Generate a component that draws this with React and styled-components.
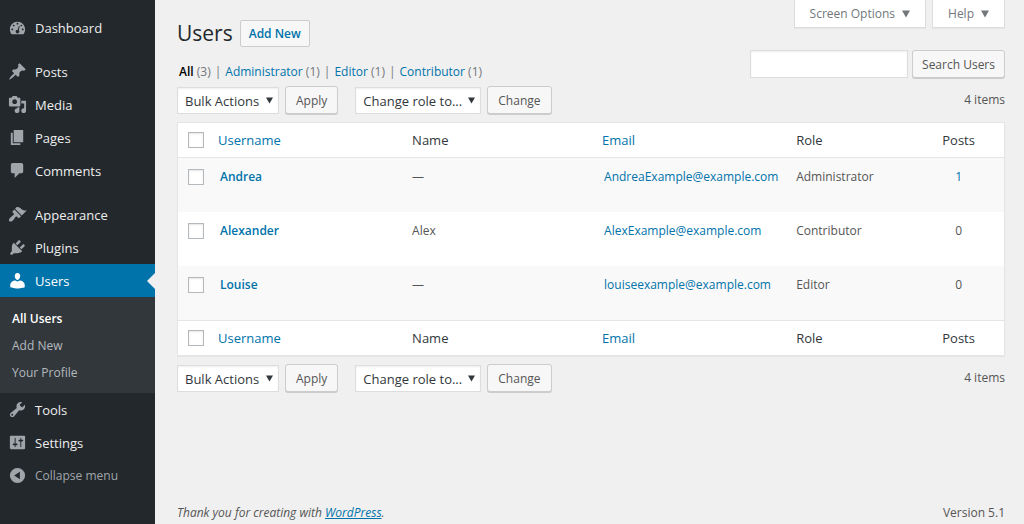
import React from "react"
import styled, { createGlobalStyle, css, ThemeProvider } from "styled-components"

const theme = {
    colors: {
        sidebar: "#23282d",
        submenu: "#32373c",
        active: "#0073aa",
        icon: "#a0a5aa",
        menuText: "#eeeeee",
        subText: "#b4b9be",
        page: "#f0f0f0",
        text: "#32373c",
        cell: "#555555",
        muted: "#72777c",
        link: "#0073aa",
        border: "#dddddd",
        line: "#e5e5e5",
        stripe: "#f9f9f9",
    },
}

const GlobalStyle = createGlobalStyle`
    * {
        box-sizing: border-box;
    }
    body {
        margin: 0;
        background: #f0f0f0;
        font-family: "Open Sans", "Noto Sans", sans-serif;
        font-size: 12px;
        line-height: 18px;
        color: #555555;
    }
    button, input, select {
        font-family: inherit;
        margin: 0;
    }
    ul {
        list-style: none;
        margin: 0;
        padding: 0;
    }
`

const Layout = styled.div`
    display: flex;
    min-height: 100vh;
`

/* Sidebar */
const Sidebar = styled.nav`
    flex: 0 0 155px;
    padding-top: 11px;
    background: ${({ theme }) => theme.colors.sidebar};
`
const MenuItem = styled.li`
    margin-top: ${({ $spaced }) => ($spaced ? "11px" : "0")};
`
const menuRow = css`
    position: relative;
    display: flex;
    align-items: center;
    gap: 8px;
    width: 100%;
    height: 33px;
    padding: 0 8px;
    border: 0;
    font-size: 13px;
    line-height: 18px;
    text-decoration: none;
    white-space: nowrap;
`
const MenuLink = styled.a`
    ${menuRow}
    color: ${({ theme, $active }) => ($active ? "#ffffff" : theme.colors.menuText)};
    background: ${({ theme, $active }) => ($active ? theme.colors.active : "transparent")};

    svg {
        fill: ${({ theme, $active }) => ($active ? "#ffffff" : theme.colors.icon)};
    }

    ${({ $active, theme }) =>
        $active &&
        css`
            &::after {
                content: "";
                position: absolute;
                top: 9px;
                right: 0;
                border: 8px solid transparent;
                border-left: 0;
                border-right-color: ${theme.colors.page};
            }
        `}
`
const CollapseButton = styled.button`
    ${menuRow}
    color: ${({ theme }) => theme.colors.icon};
    background: transparent;
    font-size: 12px;

    svg {
        fill: ${({ theme }) => theme.colors.icon};
    }
`
const MenuIcon = styled.svg`
    flex: none;
    width: 19px;
    height: 19px;
`
const Submenu = styled.ul`
    padding: 8px 0 7px;
    background: ${({ theme }) => theme.colors.submenu};
`
const SubmenuLink = styled.a`
    display: block;
    padding: 0 12px;
    font-size: 12px;
    line-height: 27px;
    text-decoration: none;
    font-weight: ${({ $current }) => ($current ? 600 : 400)};
    color: ${({ theme, $current }) => ($current ? "#ffffff" : theme.colors.subText)};
`

/* Page */
const Main = styled.main`
    flex: 1;
    min-width: 0;
    display: flex;
    flex-direction: column;
    padding: 0 19px 0 22px;
`
const PageHeader = styled.header`
    display: flex;
    justify-content: space-between;
`
const HeaderLeft = styled.div`
    padding-top: 20px;
`
const HeaderRight = styled.div`
    display: flex;
    flex-direction: column;
    align-items: flex-end;
`
const TitleRow = styled.div`
    display: flex;
    align-items: center;
    gap: 7px;
`
const Title = styled.h1`
    margin: 0;
    font-size: 21px;
    line-height: 27px;
    font-weight: 400;
    color: #23282d;
`
const AddNew = styled.a`
    padding: 0 8px;
    border: 1px solid #cccccc;
    border-radius: 2px;
    background: #f7f7f7;
    font-weight: 600;
    line-height: 25px;
    text-decoration: none;
    color: ${({ theme }) => theme.colors.link};
`
const Filters = styled.ul`
    display: flex;
    margin-top: 16px;
    padding-left: 2px;
    color: ${({ theme }) => theme.colors.muted};

    li + li::before {
        content: "|";
        margin: 0 4px;
    }
`
const FilterLink = styled.a`
    text-decoration: none;
    font-weight: ${({ $current }) => ($current ? 600 : 400)};
    color: ${({ theme, $current }) => ($current ? "#000000" : theme.colors.link)};
`
const ScreenTabs = styled.div`
    display: flex;
    gap: 6px;
`
const ScreenTab = styled.button`
    display: flex;
    align-items: center;
    gap: 7px;
    height: 28px;
    padding: 0 15px;
    border: 1px solid ${({ theme }) => theme.colors.border};
    border-top: 0;
    background: #ffffff;
    box-shadow: 0 1px 1px rgba(0, 0, 0, 0.04);
    font-size: 12px;
    color: ${({ theme }) => theme.colors.muted};
`
const SearchForm = styled.form`
    display: flex;
    gap: 4px;
    margin-top: 22px;
`
const SearchInput = styled.input`
    width: 158px;
    height: 28px;
    padding: 3px 5px;
    border: 1px solid ${({ theme }) => theme.colors.border};
    background: #ffffff;
    box-shadow: inset 0 1px 2px rgba(0, 0, 0, 0.07);
    font-size: 13px;
`
const Button = styled.button`
    height: 28px;
    padding: 0 10px;
    border: 1px solid #cccccc;
    border-radius: 3px;
    background: #f7f7f7;
    box-shadow: 0 1px 0 #cccccc;
    font-size: 12px;
    color: ${({ theme }) => theme.colors.cell};
    white-space: nowrap;
`
const SearchButton = styled(Button)`
    padding: 0 9px;
`
const TableNav = styled.div`
    display: flex;
    align-items: center;
    gap: 17px;
    padding: ${({ $top }) => ($top ? "5px" : "8px")} 0 8px;
`
const NavGroup = styled.div`
    display: flex;
    align-items: flex-end;
    gap: 6px;
`
const SelectWrap = styled.div`
    position: relative;
    width: ${({ $wide }) => ($wide ? "126px" : "102px")};

    svg {
        position: absolute;
        top: 10px;
        right: 6px;
        pointer-events: none;
    }
`
const Select = styled.select`
    display: block;
    width: 100%;
    height: 27px;
    padding: 0 7px;
    appearance: none;
    border: 1px solid ${({ theme }) => theme.colors.border};
    border-radius: 0;
    background: #ffffff;
    box-shadow: inset 0 1px 2px rgba(0, 0, 0, 0.07);
    font-size: 13px;
    color: ${({ theme }) => theme.colors.text};
`
const ItemCount = styled.span`
    margin-left: auto;
    color: ${({ theme }) => theme.colors.cell};
`

/* Users table */
const Table = styled.table`
    width: 100%;
    table-layout: fixed;
    border-collapse: separate;
    border-spacing: 0;
    border: 1px solid ${({ theme }) => theme.colors.line};
    background: #ffffff;
    box-shadow: 0 1px 1px rgba(0, 0, 0, 0.04);

    thead th, thead td {
        border-bottom: 1px solid ${({ theme }) => theme.colors.line};
    }
    tfoot th, tfoot td {
        border-top: 1px solid ${({ theme }) => theme.colors.line};
    }
    tbody tr:nth-child(odd) {
        background: ${({ theme }) => theme.colors.stripe};
    }
`
const HeadCell = styled.th`
    width: ${({ $width }) => $width || "auto"};
    height: 35px;
    padding: 0 8px;
    font-size: 13px;
    font-weight: 400;
    text-align: ${({ $center }) => ($center ? "center" : "left")};
    color: ${({ theme }) => theme.colors.text};
`
const CheckCell = styled.td`
    width: 32px;
    height: ${({ $body }) => ($body ? "54px" : "35px")};
    padding: ${({ $body }) => ($body ? "11px 0 0 10px" : "0 0 0 10px")};
    vertical-align: ${({ $body }) => ($body ? "top" : "middle")};
`
const Checkbox = styled.input`
    display: block;
    width: 16px;
    height: 16px;
    margin: 0;
    appearance: none;
    border: 1px solid #b4b9be;
    background: #ffffff;
    box-shadow: inset 0 1px 2px rgba(0, 0, 0, 0.1);
`
const Cell = styled.td`
    padding: 10px 0 0 ${({ $inset }) => ($inset ? "10px" : "8px")};
    vertical-align: top;
    text-align: ${({ $center }) => ($center ? "center" : "left")};
    color: ${({ theme }) => theme.colors.cell};

    ${({ $center }) => $center && "padding-right: 8px;"}
`
const Link = styled.a`
    text-decoration: none;
    font-weight: ${({ $strong }) => ($strong ? 600 : 400)};
    color: ${({ theme }) => theme.colors.link};
`

const Footer = styled.footer`
    display: flex;
    justify-content: space-between;
    margin-top: auto;
    padding-bottom: 2px;

    a {
        color: ${({ theme }) => theme.colors.link};
    }
`

const icons = {
    dashboard:
        "M3.76 17h12.48c1.1-1.37 1.76-3.11 1.76-5 0-4.42-3.58-8-8-8s-8 3.58-8 8c0 1.89.66 3.63 1.76 5zM10 5c.55 0 1 .45 1 1s-.45 1-1 1-1-.45-1-1 .45-1 1-1zM6 7c.55 0 1 .45 1 1s-.45 1-1 1-1-.45-1-1 .45-1 1-1zm8 0c.55 0 1 .45 1 1s-.45 1-1 1-1-.45-1-1 .45-1 1-1zm-2.63 1.51l1 .3-1.06 3.97c.44.37.69.9.69 1.47 0 1.1-.9 2-2 2s-2-.9-2-2 .9-2 2-2c.12 0 .23.01.34.03zM4.5 11c.55 0 1 .45 1 1s-.45 1-1 1-1-.45-1-1 .45-1 1-1zm11 0c.55 0 1 .45 1 1s-.45 1-1 1-1-.45-1-1 .45-1 1-1z",
    post: "M10.44 3.02l1.82-1.82 6.36 6.35-1.83 1.82c-1.05-.68-2.48-.57-3.41.36l-.75.75c-.92.93-1.04 2.35-.35 3.41l-1.83 1.82-2.41-2.41-2.8 2.79c-.42.42-3.38 2.71-3.8 2.29s1.86-3.39 2.28-3.81l2.79-2.79L4.1 9.36l1.83-1.82c1.05.69 2.48.57 3.4-.36l.75-.75c.93-.92 1.05-2.35.36-3.41z",
    media:
        "M13 11V4c0-.55-.45-1-1-1h-1.67L9 1H5L3.67 3H2c-.55 0-1 .45-1 1v7c0 .55.45 1 1 1h10c.55 0 1-.45 1-1zM7 4.5c1.38 0 2.5 1.12 2.5 2.5S8.38 9.5 7 9.5 4.5 8.38 4.5 7 5.62 4.5 7 4.5zM14 6h5v10.5c0 1.38-1.12 2.5-2.5 2.5S14 17.88 14 16.5s1.12-2.5 2.5-2.5c.17 0 .34.02.5.05V9h-3V6zm-4 8.05V13h2v3.5c0 1.38-1.12 2.5-2.5 2.5S7 17.88 7 16.5 8.12 14 9.5 14c.17 0 .34.02.5.05z",
    page: "M6 15V2h10v13H6zm-1 1h8v2H3V5h2v11z",
    comments:
        "M5 2h9c1.1 0 2 .9 2 2v7c0 1.1-.9 2-2 2h-2l-5 5v-5H5c-1.1 0-2-.9-2-2V4c0-1.1.9-2 2-2z",
    appearance:
        "M14.48 11.06L7.41 3.99l1.5-1.5c.5-.56 2.3-.47 3.51.32 1.21.8 1.43 1.28 2.91 2.1 1.18.64 2.45 1.26 4.45.85zm-.71.71L6.7 4.7 4.93 6.47c-.39.39-.39 1.02 0 1.41l1.06 1.06c.39.39.39 1.03 0 1.42-.6.6-1.43 1.11-2.21 1.69-.35.26-.7.53-1.01.84C1.43 14.23.4 16.08 1.4 17.07c.99 1 2.84-.03 4.18-1.36.31-.31.58-.66.85-1.02.57-.78 1.08-1.61 1.69-2.21.39-.39 1.02-.39 1.41 0l1.06 1.06c.39.39 1.02.39 1.41 0z",
    plugins:
        "M13.11 4.36L9.87 7.6 8 5.73l3.24-3.24c.35-.34 1.05-.2 1.56.32.52.51.66 1.21.31 1.55zm-8 1.77l.91-1.12 9.01 9.01-1.19.84c-.71.71-2.63 1.16-3.82 1.16H6.14L4.9 17.26c-.59.59-1.54.59-2.12 0-.59-.58-.59-1.53 0-2.12l1.24-1.24v-3.88c0-1.13.4-3.19 1.09-3.89zm7.26 3.97l3.24-3.24c.34-.35 1.04-.21 1.55.31.52.51.66 1.21.31 1.55l-3.24 3.25z",
    users: "M10 9.4c-2.27 0-2.83-3.5-2.83-3.5C6.9 4.02 7.72 2 9.97 2c2.26 0 3.08 2.02 2.81 3.9 0 0-.51 3.5-2.78 3.5zm0 1.6l2.5-1.1c2.6.1 5.1 2.2 5.1 4.7v2.4s-3.9 1.3-7.6 1.3-7.6-1.3-7.6-1.3v-2.4c0-2.5 2.3-4.6 5.1-4.7z",
    tools: "M16.68 9.77c-1.34 1.34-3.3 1.67-4.95.99l-5.41 6.52c-.99.99-2.59.99-3.58 0s-.99-2.59 0-3.57l6.52-5.42c-.68-1.65-.35-3.61.99-4.95 1.28-1.28 3.12-1.62 4.72-1.06l-2.89 2.89 2.82 2.82 2.86-2.87c.53 1.58.18 3.39-1.08 4.65zM3.81 16.21c.4.39 1.04.39 1.43 0 .4-.4.4-1.04 0-1.43-.39-.4-1.03-.4-1.43 0-.39.39-.39 1.03 0 1.43z",
    settings:
        "M18 16V4c0-.55-.45-1-1-1H3c-.55 0-1 .45-1 1v12c0 .55.45 1 1 1h14c.55 0 1-.45 1-1zM8 11h1c.55 0 1 .45 1 1s-.45 1-1 1H8v1.5c0 .28-.22.5-.5.5s-.5-.22-.5-.5V13H6c-.55 0-1-.45-1-1s.45-1 1-1h1V5.5c0-.28.22-.5.5-.5s.5.22.5.5V11zm5-2h-1c-.55 0-1-.45-1-1s.45-1 1-1h1V5.5c0-.28.22-.5.5-.5s.5.22.5.5V7h1c.55 0 1 .45 1 1s-.45 1-1 1h-1v5.5c0 .28-.22.5-.5.5s-.5-.22-.5-.5V9z",
    collapse: "M10 2a8 8 0 1 0 0 16 8 8 0 0 0 0-16zm2.5 4v8L6.5 10z",
}

const menu = [
    { label: "Dashboard", icon: "dashboard" },
    { label: "Posts", icon: "post", spaced: true },
    { label: "Media", icon: "media" },
    { label: "Pages", icon: "page" },
    { label: "Comments", icon: "comments" },
    { label: "Appearance", icon: "appearance", spaced: true },
    { label: "Plugins", icon: "plugins" },
    { label: "Users", icon: "users", active: true, children: ["All Users", "Add New", "Your Profile"] },
    { label: "Tools", icon: "tools" },
    { label: "Settings", icon: "settings" },
]

const filters = [
    { label: "All", count: 3 },
    { label: "Administrator", count: 1 },
    { label: "Editor", count: 1 },
    { label: "Contributor", count: 1 },
]

const users = [
    { username: "Andrea", name: "—", email: "AndreaExample@example.com", role: "Administrator", posts: 1 },
    { username: "Alexander", name: "Alex", email: "AlexExample@example.com", role: "Contributor", posts: 0 },
    { username: "Louise", name: "—", email: "louiseexample@example.com", role: "Editor", posts: 0 },
]

const Icon = ({ name }) => (
    <MenuIcon viewBox="0 0 20 20" aria-hidden="true">
        <path fillRule="evenodd" d={icons[name]} />
    </MenuIcon>
)

const Arrow = ({ size, color }) => (
    <svg width={size} height={size} viewBox="0 0 8 8" aria-hidden="true">
        <path d="M0 0.5h8L4 7.5z" fill={color} />
    </svg>
)

const AdminMenu = () => (
    <Sidebar aria-label="Main menu">
        <ul>
            {menu.map(({ label, icon, spaced, active, children }) => (
                <MenuItem key={label} $spaced={spaced}>
                    <MenuLink href="#" $active={active}>
                        <Icon name={icon} />
                        {label}
                    </MenuLink>
                    {children && (
                        <Submenu>
                            {children.map((child, i) => (
                                <li key={child}>
                                    <SubmenuLink href="#" $current={i === 0}>
                                        {child}
                                    </SubmenuLink>
                                </li>
                            ))}
                        </Submenu>
                    )}
                </MenuItem>
            ))}
            <MenuItem>
                <CollapseButton type="button">
                    <Icon name="collapse" />
                    Collapse menu
                </CollapseButton>
            </MenuItem>
        </ul>
    </Sidebar>
)

const BulkNav = ({ top }) => (
    <TableNav $top={top}>
        <NavGroup>
            <SelectWrap>
                <Select aria-label="Select bulk action">
                    <option>Bulk Actions</option>
                    <option>Delete</option>
                </Select>
                <Arrow size={7} color="#32373c" />
            </SelectWrap>
            <Button type="button">Apply</Button>
        </NavGroup>
        <NavGroup>
            <SelectWrap $wide>
                <Select aria-label="Change role to">
                    <option>Change role to...</option>
                    <option>Editor</option>
                </Select>
                <Arrow size={7} color="#32373c" />
            </SelectWrap>
            <Button type="button">Change</Button>
        </NavGroup>
        <ItemCount>4 items</ItemCount>
    </TableNav>
)

const HeadRow = () => (
    <tr>
        <CheckCell>
            <Checkbox type="checkbox" aria-label="Select all" />
        </CheckCell>
        <HeadCell scope="col" $width="23.5%">
            <Link href="#">Username</Link>
        </HeadCell>
        <HeadCell scope="col" $width="23%">Name</HeadCell>
        <HeadCell scope="col" $width="23.5%">
            <Link href="#">Email</Link>
        </HeadCell>
        <HeadCell scope="col">Role</HeadCell>
        <HeadCell scope="col" $width="11%" $center>Posts</HeadCell>
    </tr>
)

const UsersTable = () => (
    <Table>
        <thead>
            <HeadRow />
        </thead>
        <tbody>
            {users.map(({ username, name, email, role, posts }) => (
                <tr key={username}>
                    <CheckCell $body>
                        <Checkbox type="checkbox" aria-label={`Select ${username}`} />
                    </CheckCell>
                    <Cell $inset>
                        <Link href="#" $strong>{username}</Link>
                    </Cell>
                    <Cell>{name}</Cell>
                    <Cell $inset>
                        <Link href="#">{email}</Link>
                    </Cell>
                    <Cell>{role}</Cell>
                    <Cell $center>{posts > 0 ? <Link href="#">{posts}</Link> : posts}</Cell>
                </tr>
            ))}
        </tbody>
        <tfoot>
            <HeadRow />
        </tfoot>
    </Table>
)

const App = () => (
    <ThemeProvider theme={theme}>
        <GlobalStyle />
        <Layout>
            <AdminMenu />
            <Main>
                <PageHeader>
                    <HeaderLeft>
                        <TitleRow>
                            <Title>Users</Title>
                            <AddNew href="#">Add New</AddNew>
                        </TitleRow>
                        <Filters>
                            {filters.map(({ label, count }, i) => (
                                <li key={label}>
                                    <FilterLink href="#" $current={i === 0}>{label}</FilterLink> ({count})
                                </li>
                            ))}
                        </Filters>
                    </HeaderLeft>
                    <HeaderRight>
                        <ScreenTabs>
                            <ScreenTab type="button">
                                Screen Options <Arrow size={8} color="#72777c" />
                            </ScreenTab>
                            <ScreenTab type="button">
                                Help <Arrow size={8} color="#72777c" />
                            </ScreenTab>
                        </ScreenTabs>
                        <SearchForm>
                            <SearchInput type="search" aria-label="Search Users" />
                            <SearchButton type="button">Search Users</SearchButton>
                        </SearchForm>
                    </HeaderRight>
                </PageHeader>
                <BulkNav top />
                <UsersTable />
                <BulkNav />
                <Footer>
                    <em>
                        Thank you for creating with <a href="#">WordPress</a>.
                    </em>
                    <span>Version 5.1</span>
                </Footer>
            </Main>
        </Layout>
    </ThemeProvider>
)

export default App
